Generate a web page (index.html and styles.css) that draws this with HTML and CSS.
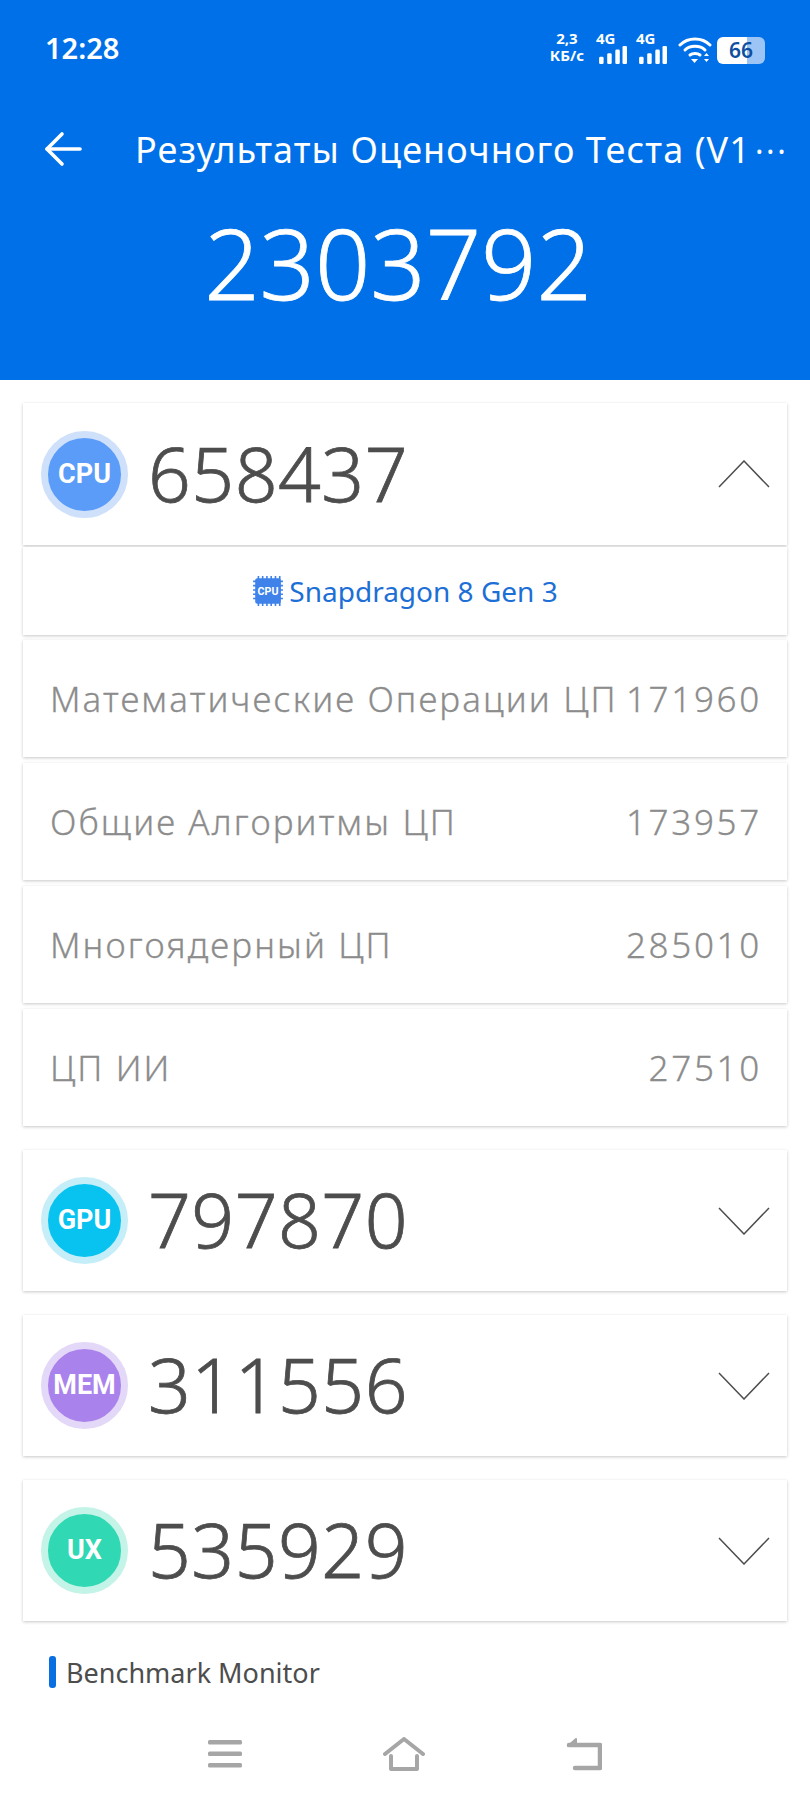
FILE: index.html
```html
<!DOCTYPE html>
<html lang="ru">

<head>
    <meta charset="UTF-8">
    <title>Результаты</title>
    <link rel="stylesheet" href="styles.css">
</head>

<body>
    <div id="top">
        <div id="status">
            <span id="clock">12:28</span>
            <div id="status_icons">
                <div class="speed">2,3<br>КБ/с</div>
                <div class="signal">
                    <span class="net">4G</span>
                    <svg width="32" height="20" viewBox="0 0 32 20"><rect x="0" y="12" width="5" height="8" rx="1.5"/><rect x="9" y="8" width="5" height="12" rx="1.5"/><rect x="18" y="4" width="5" height="16" rx="1.5"/><rect x="26" y="0" width="5" height="20" rx="1.5"/></svg>
                </div>
                <div class="signal">
                    <span class="net">4G</span>
                    <svg width="32" height="20" viewBox="0 0 32 20"><rect x="0" y="12" width="5" height="8" rx="1.5"/><rect x="9" y="8" width="5" height="12" rx="1.5"/><rect x="18" y="4" width="5" height="16" rx="1.5"/><rect x="26" y="0" width="5" height="20" rx="1.5"/></svg>
                </div>
                <svg class="wifi" width="34" height="28" viewBox="0 0 34 28" fill="none" stroke="#fff" stroke-width="3" stroke-linecap="round"><path d="M2 9C10 1 24 1 32 9"/><path d="M7 14C12 9 22 9 27 14"/><path d="M12 19C14.500 17 19.500 17 22 19"/><path d="M13 23H20L16.500 27Z" fill="#fff" stroke="none"/><path d="M26 20L28.500 17L31 20Z M26 23L28.500 26L31 23Z" fill="#fff" stroke="none"/></svg>
                <div class="battery"><span class="level">66</span></div>
            </div>
        </div>
        <div id="titlebar">
            <svg class="back" width="38" height="36" viewBox="0 0 38 36" fill="none" stroke="#fff" stroke-width="3.600" stroke-linecap="round" stroke-linejoin="round"><path d="M36 18H3"/><path d="M18 3L3 18L18 33"/></svg>
            <div class="title">Результаты Оценочного Теста (V1<span class="dots">···</span></div>
        </div>
        <div id="total">2303792</div>
    </div>

    <div id="list">
        <div class="card">
            <div class="score_row open">
                <div class="badge cpu">CPU</div>
                <div class="score">658437</div>
                <svg class="chevron" width="52" height="28" viewBox="0 0 52 28"><path d="M1 27L26 1L51 27"/></svg>
            </div>
            <div class="chip_row">
                <svg width="32" height="32" viewBox="0 0 30 30"><path d="M6 1V29M10 1V29M14 1V29M18 1V29M22 1V29M26 1V29M1 6H29M1 10H29M1 14H29M1 18H29M1 22H29" stroke="#3e82ea" stroke-width="1.500"/><rect x="3" y="3" width="24" height="24" rx="2" fill="#3e82ea"/><text x="15" y="19" text-anchor="middle" class="chip_text">CPU</text></svg>
                <span>Snapdragon 8 Gen 3</span>
            </div>
            <div class="sub_row"><span>Математические Операции ЦП</span><span class="value">171960</span></div>
            <div class="sub_row"><span>Общие Алгоритмы ЦП</span><span class="value">173957</span></div>
            <div class="sub_row"><span>Многоядерный ЦП</span><span class="value">285010</span></div>
            <div class="sub_row"><span>ЦП ИИ</span><span class="value">27510</span></div>
        </div>

        <div class="card">
            <div class="score_row">
                <div class="badge gpu">GPU</div>
                <div class="score">797870</div>
                <svg class="chevron" width="52" height="28" viewBox="0 0 52 28"><path d="M1 1L26 27L51 1"/></svg>
            </div>
        </div>

        <div class="card">
            <div class="score_row">
                <div class="badge mem">MEM</div>
                <div class="score">311556</div>
                <svg class="chevron" width="52" height="28" viewBox="0 0 52 28"><path d="M1 1L26 27L51 1"/></svg>
            </div>
        </div>

        <div class="card">
            <div class="score_row">
                <div class="badge ux">UX</div>
                <div class="score">535929</div>
                <svg class="chevron" width="52" height="28" viewBox="0 0 52 28"><path d="M1 1L26 27L51 1"/></svg>
            </div>
        </div>
    </div>

    <div id="monitor"><i></i>Benchmark Monitor</div>

    <div id="navbar">
        <svg width="34" height="30" viewBox="0 0 34 30" fill="#a6a6a6"><rect y="1" width="34" height="4.500" rx="1.500"/><rect y="12.500" width="34" height="4.500" rx="1.500"/><rect y="24" width="34" height="4.500" rx="1.500"/></svg>
        <svg width="42" height="34" viewBox="0 0 42 34" fill="none" stroke="#a6a6a6" stroke-width="4" stroke-linecap="round" stroke-linejoin="round"><path d="M2 17L21 2L40 17"/><path d="M8 19V32H34V19"/></svg>
        <svg width="36" height="34" viewBox="0 0 36 34" fill="none" stroke="#a6a6a6" stroke-width="4.500" stroke-linecap="round" stroke-linejoin="round"><path d="M3 8H34V31H9"/><path d="M2 9L10 2V9Z" fill="#a6a6a6" stroke-width="2"/></svg>
    </div>
</body>

</html>
```
FILE: styles.css
```css
* {
    margin: 0;
    padding: 0;
    box-sizing: border-box;
}

body {
    width: 810px;
    height: 1800px;
    background-color: #fff;
    font-family: "Noto Sans", "Open Sans", sans-serif;
    overflow: hidden;
}

#top {
    height: 380px;
    background-color: #0070e8;
    color: #fff;
}

#status {
    display: flex;
    justify-content: space-between;
    align-items: center;
    height: 50px;
    padding: 22px 45px 0 45px;
    box-sizing: content-box;
}

#clock {
    font-size: 29px;
    font-weight: 600;
}

#status_icons {
    display: flex;
    align-items: flex-end;
    gap: 5px;
    fill: #fff;
}

.speed {
    margin-right: 7px;
    font-size: 15px;
    font-weight: 700;
    line-height: 17px;
    text-align: center;
}

.signal {
    position: relative;
    width: 34px;
    height: 30px;
    margin-left: 1px;
    display: flex;
    align-items: flex-end;
}

.signal svg {
    height: 18px;
    width: 33px;
}

.net {
    position: absolute;
    left: -1px;
    top: -6px;
    font-size: 15px;
    font-weight: 700;
}

.wifi {
    margin-left: 2px;
}

.battery {
    width: 48px;
    height: 27px;
    border-radius: 6px;
    background: linear-gradient(90deg, #fff 0, #fff 30px, #9cc4f5 30px);
    color: #0f4fa0;
    font-size: 21px;
    font-weight: 600;
    line-height: 27px;
    text-align: center;
}

#titlebar {
    display: flex;
    align-items: center;
    height: 50px;
    margin-top: 52px;
    padding-left: 44px;
}

.title {
    margin-left: 53px;
    font-size: 36px;
    letter-spacing: 1.100px;
    white-space: nowrap;
}

.dots {
    font-size: 32px;
    letter-spacing: 2.500px;
    margin-left: 4px;
}

#total {
    margin-top: 23px;
    padding-right: 14px;
    font-size: 97px;
    font-weight: 300;
    -webkit-text-stroke: 0.800px #fff;
    line-height: 130px;
    text-align: center;
}

#list {
    display: flex;
    flex-direction: column;
    gap: 24px;
    padding: 23px 23px 0;
}

.card {
    display: flex;
    flex-direction: column;
    gap: 2px;
}

.score_row,
.chip_row,
.sub_row {
    background-color: #fff;
    box-shadow: 0 1px 3px rgba(0, 0, 0, 0.22);
}

.score_row {
    display: flex;
    align-items: center;
    height: 141px;
    padding: 0 17px 0 18px;
}

.score_row.open {
    height: 142px;
}

.badge {
    flex: none;
    width: 87px;
    height: 87px;
    border-radius: 50%;
    color: #fff;
    font-family: Roboto, sans-serif;
    font-size: 27px;
    font-weight: 700;
    text-align: center;
}

.cpu {
    background-color: #5a9cf8;
    border: 7px solid #cfe0fb;
    line-height: 73px;
}

.gpu {
    background-color: #08c2f0;
    border: 7px solid #c6eef9;
    line-height: 73px;
}

.mem {
    background-color: #aa82ec;
    border: 7px solid #e4d8f8;
    line-height: 73px;
}

.ux {
    background-color: #30d8b4;
    border: 7px solid #c4f3e8;
    line-height: 73px;
}

.score {
    flex: 1;
    margin-left: 20px;
    padding-bottom: 3px;
    color: #4d4d4d;
    font-size: 75px;
    font-weight: 300;
    -webkit-text-stroke: 0.800px #4d4d4d;
    letter-spacing: 0.500px;
}

.chevron {
    flex: none;
    fill: none;
    stroke: #4d4d4d;
    stroke-width: 1.500;
}

.chip_row {
    display: flex;
    align-items: center;
    justify-content: center;
    gap: 5px;
    height: 88px;
    color: #1d6fd6;
    font-size: 28px;
}

.chip_text {
    fill: #fff;
    font-family: Roboto, sans-serif;
    font-size: 10px;
    font-weight: 700;
}

.sub_row {
    display: flex;
    align-items: center;
    justify-content: space-between;
    height: 117px;
    margin-top: 4px;
    padding: 0 27px;
    color: #8c8c8c;
    font-size: 35px;
    font-weight: 300;
    -webkit-text-stroke: 0.300px #8c8c8c;
    letter-spacing: 2.100px;
    white-space: nowrap;
}

.chip_row + .sub_row {
    margin-top: 3px;
}

.value {
    letter-spacing: 2.700px;
    margin-right: -2px;
}

#monitor {
    display: flex;
    align-items: center;
    height: 32px;
    margin: 35px 0 0 49px;
    color: #4d4d4d;
    font-size: 27px;
}

#monitor i {
    width: 7px;
    height: 32px;
    margin-right: 10px;
    border-radius: 3px;
    background-color: #0a6fe0;
}

#navbar {
    display: flex;
    align-items: center;
    justify-content: center;
    gap: 141px;
    margin-top: 49px;
}
```
